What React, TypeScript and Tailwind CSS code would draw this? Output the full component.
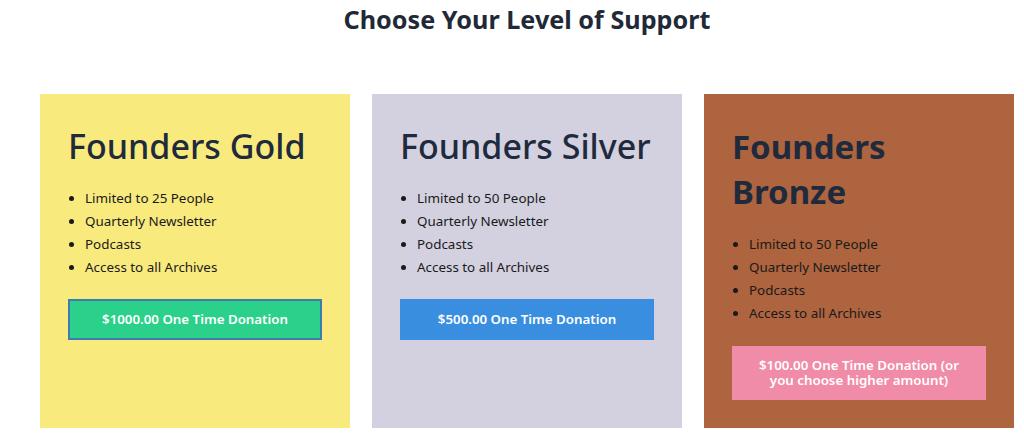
import React from 'react';

type Tier = {
    name: string;
    perks: string[];
    cta: string;
    cardClass: string;
    titleClass: string;
    listClass: string;
    buttonClass: string;
};

const TIERS: Tier[] = [
    {
        name: 'Founders Gold',
        perks: ['Limited to 25 People', 'Quarterly Newsletter', 'Podcasts', 'Access to all Archives'],
        cta: '$1000.00 One Time Donation',
        cardClass: 'bg-[#f9ea7e]',
        titleClass: 'font-medium text-[34px]',
        listClass: 'mt-[18px]',
        buttonClass: 'mt-[20px] py-[10px] bg-[#2bd18a] border-2 border-[#3d7bb0]',
    },
    {
        name: 'Founders Silver',
        perks: ['Limited to 50 People', 'Quarterly Newsletter', 'Podcasts', 'Access to all Archives'],
        cta: '$500.00 One Time Donation',
        cardClass: 'bg-[#d3d1e0]',
        titleClass: 'font-medium text-[34px]',
        listClass: 'mt-[18px]',
        buttonClass: 'mt-[20px] py-[12px] bg-[#3a8ee0]',
    },
    {
        name: 'Founders Bronze',
        perks: ['Limited to 50 People', 'Quarterly Newsletter', 'Podcasts', 'Access to all Archives'],
        cta: '$100.00 One Time Donation (or you choose higher amount)',
        cardClass: 'bg-[#ad643f]',
        titleClass: 'font-bold text-[33px]',
        listClass: 'mt-[19px]',
        buttonClass: 'mt-[21px] py-[12px] bg-[#f08ba8]',
    },
];

export default function App() {
    return (
        <div className="min-h-[435px] bg-white pl-[40px] pr-[10px]" style={{ fontFamily: '"Noto Sans", "Open Sans", sans-serif' }}>
            <h2 className="pt-[2px] text-center text-[25.2px] font-bold leading-[34px] text-[#1f2937]">Choose Your Level of Support</h2>
            <div className="mt-[58px] grid grid-cols-3 gap-[22px]">
                {TIERS.map(tier => (
                    <div key={tier.name} className={`h-[334px] px-[28px] pt-[30px] ${tier.cardClass}`}>
                        <h3 className={`leading-[45px] text-[#1f2a3c] ${tier.titleClass}`}>{tier.name}</h3>
                        <ul className={`list-disc pl-[17px] text-[13.4px] leading-[23px] text-[#1a1a1a] ${tier.listClass}`}>
                            {tier.perks.map(p => <li key={p}>{p}</li>)}
                        </ul>
                        <button className={`flex min-h-[41px] w-full items-center justify-center px-[20px] text-center text-[13.3px] font-semibold leading-[15px] text-white ${tier.buttonClass}`}>
                            {tier.cta}
                        </button>
                    </div>
                ))}
            </div>
        </div>
    );
}
